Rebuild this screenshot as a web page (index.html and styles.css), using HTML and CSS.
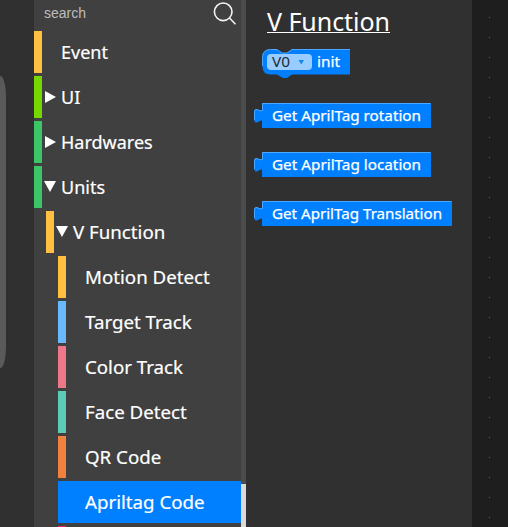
FILE: index.html
```
<!DOCTYPE html>
<html lang="en">
<head>
<meta charset="utf-8">
<title>Blocks</title>
<link rel="stylesheet" href="styles.css">
</head>
<body>
<div class="app">
  <div class="gutter"><div class="device"></div></div>
  <nav class="toolbox">
    <div class="search"><span>search</span>
      <svg width="24" height="24" viewBox="0 0 24 24"><circle cx="11.2" cy="9.8" r="8.8"/><path d="M17.3 15.8L23.500 22.3"/></svg>
    </div>
    <div class="row event"><i></i><span class="label">Event</span></div>
    <div class="row ui"><i class="closed"></i><span class="label">UI</span></div>
    <div class="row hard"><i class="closed"></i><span class="label">Hardwares</span></div>
    <div class="row units"><i class="open"></i><span class="label">Units</span></div>
    <div class="row l1 vfn"><i class="open"></i><span class="label">V Function</span></div>
    <div class="row l2 motion"><i></i><span class="label">Motion Detect</span></div>
    <div class="row l2 target"><i></i><span class="label">Target Track</span></div>
    <div class="row l2 color"><i></i><span class="label">Color Track</span></div>
    <div class="row l2 face"><i></i><span class="label">Face Detect</span></div>
    <div class="row l2 qr"><i></i><span class="label">QR Code</span></div>
    <div class="row l2 april"><i></i><span class="label">Apriltag Code</span></div>
    <div class="row l2 next"></div>
  </nav>
  <div class="scroll"><div class="thumb"></div></div>
  <section class="flyout">
    <h1><span>V Function</span></h1>
    <svg class="init" width="90" height="30" viewBox="0 0 90 30">
      <path class="body" d="M0.5 8.5Q0.5 .5 8.500 .5H15L20 4H25L30 .5H88V25.500H30L25 29H21L15 25.500H8.500Q.5 25.500 .5 17.500Z"/>
      <path class="edge" d="M.5 17V8.500Q.5 .5 8.500 .5H15L20 4H25L30 .5H88"/>
      <rect class="field" x="5" y="5" width="45" height="16" rx="4"/>
      <text class="var" x="10" y="18" textLength="18" lengthAdjust="spacingAndGlyphs">V0</text>
      <path class="caret" d="M36.500 11h5.500l-2.750 4.500z"/>
      <text x="55" y="18" textLength="23" lengthAdjust="spacingAndGlyphs">init</text>
    </svg>
    <svg class="value" width="177" height="25" viewBox="0 0 177 25">
      <path class="body" d="M8 0H177V25H8V17.500C5 17.500 4 20 1.500 19.500Q0 19 0 16V9.500Q0 6 2 6C4.500 6 5 8 8 7.500Z"/>
      <path class="edge" d="M.5 17V9.500Q.5 6.500 2 6.500C4.500 6.500 5 8.500 8.500 7.500V.5H176.500"/>
      <text x="18" y="18" textLength="149" lengthAdjust="spacingAndGlyphs">Get AprilTag rotation</text>
    </svg>
    <svg class="value" width="177" height="25" viewBox="0 0 177 25">
      <path class="body" d="M8 0H177V25H8V17.500C5 17.500 4 20 1.500 19.500Q0 19 0 16V9.500Q0 6 2 6C4.500 6 5 8 8 7.500Z"/>
      <path class="edge" d="M.5 17V9.500Q.5 6.500 2 6.500C4.500 6.500 5 8.500 8.500 7.500V.5H176.500"/>
      <text x="18" y="18" textLength="149" lengthAdjust="spacingAndGlyphs">Get AprilTag location</text>
    </svg>
    <svg class="value" width="198" height="25" viewBox="0 0 198 25">
      <path class="body" d="M8 0H198V25H8V17.500C5 17.500 4 20 1.500 19.500Q0 19 0 16V9.500Q0 6 2 6C4.500 6 5 8 8 7.500Z"/>
      <path class="edge" d="M.5 17V9.500Q.5 6.500 2 6.500C4.500 6.500 5 8.500 8.500 7.500V.5H197.500"/>
      <text x="18" y="18" textLength="170" lengthAdjust="spacingAndGlyphs">Get AprilTag Translation</text>
    </svg>
  </section>
  <div class="canvas"></div>
</div>
</body>
</html>
```
FILE: styles.css
```
* { box-sizing: border-box; }
body { margin: 0; background: #1e1e1e; color: #fff; font-family: "Noto Sans", "Open Sans", sans-serif; overflow: hidden; }
.app { display: flex; width: 508px; height: 527px; overflow: hidden; }
.gutter { width: 34px; background: #303030; padding-top: 76px; }
.device { width: 6px; height: 292px; background: #5a5a5a; border-radius: 0 6px 6px 0 / 0 20px 20px 0; }
.toolbox { width: 207px; background: #404040; display: flex; flex-direction: column; gap: 3px; }
.search { height: 28px; flex: none; display: flex; justify-content: space-between; padding: 2px 5px 0 10px; font: 14px/23px "Liberation Sans", sans-serif; color: #bdbdbd; }
.search svg { fill: none; stroke: #f4f4f4; stroke-width: 1.6; }
.row { height: 42px; flex: none; display: flex; align-items: center; border-left: 8px solid; }
.row i { width: 19px; height: 42px; flex: none; display: flex; align-items: center; padding: 0 0 1px 3px; }
.l1 { margin-left: 12px; }
.l2 { margin-left: 24px; }
.closed::before { content: ""; border: solid transparent; border-width: 6.5px 0 6.5px 11px; border-left-color: #fff; }
.row .open { padding-left: 2px; padding-bottom: 1px; }
.open::before { content: ""; border: solid transparent; border-width: 11px 6.500px 0; border-top-color: #fff; }
.label { font-size: 18px; line-height: 42px; white-space: nowrap; -webkit-text-stroke: .2px #fff; }
.event, .vfn, .motion { border-color: #ffbf40; }
.vfn .label, .l2 .label { font-size: 18.700px; }
.ui { border-color: #77d700; }
.hard, .units { border-color: #3cc668; }
.target { border-color: #69b9ff; }
.color { border-color: #ee7887; }
.face { border-color: #5accb8; }
.qr { border-color: #f1813f; }
.april { border-color: #0080ff; background: #0080ff; }
.next { border-color: #ed285f; }
.scroll { width: 5px; background: #4c4c4c; padding-top: 484px; }
.thumb { height: 43px; background: #d9d9d9; }
.flyout { width: 226px; background: #303030; padding-left: 8px; }
h1 { margin: 0 0 0 13px; height: 49px; font-size: 25px; font-weight: 400; line-height: 42px; letter-spacing: -.05px; }
h1 span { display: inline-block; height: 33px; border-bottom: 1px solid #fff; }
.flyout svg { display: block; font-size: 15px; fill: #fff; }
.flyout text { stroke: #fff; stroke-width: .25px; }
.flyout .init { margin: 0 0 24px 8px; }
.value { margin-bottom: 24px; }
.body { fill: #0080ff; }
.edge { fill: none; stroke: #4da6ff; }
.field { fill: #99ccff; }
.flyout .var { fill: #202a35; stroke: none; }
.caret { fill: #1688f5; }
.canvas { width: 36px; background: #1e1e1e radial-gradient(circle at 17.5px 17.5px, #626262 0 .6px, transparent .7px) 0 0 / 36px 20px; }
```
